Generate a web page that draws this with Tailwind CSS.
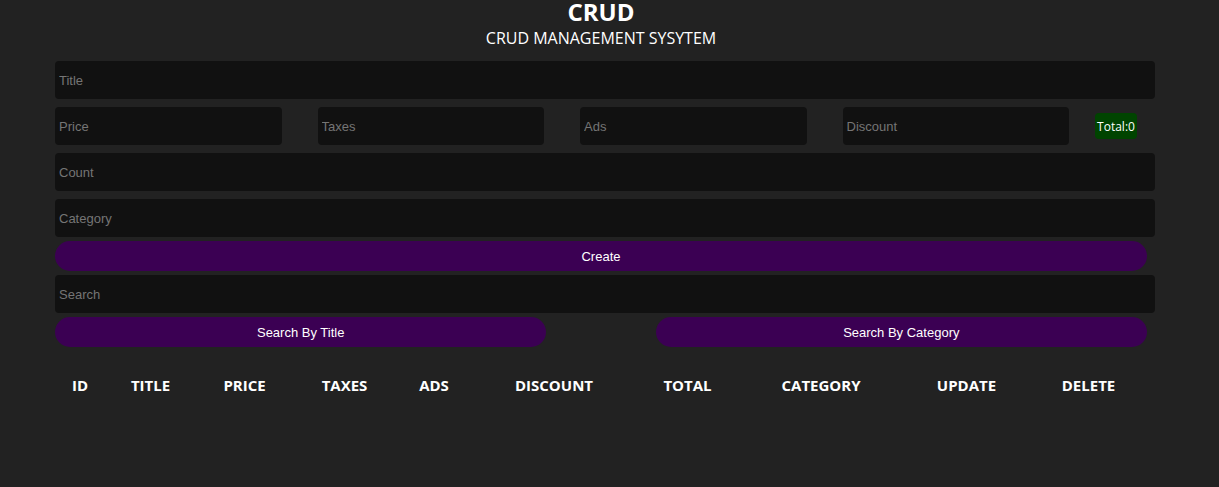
<!DOCTYPE html>
<html lang="en">
<head>
<meta charset="utf-8">
<meta name="viewport" content="width=device-width, initial-scale=1">
<title>CRUD</title>
<script src="https://cdn.jsdelivr.net/npm/@tailwindcss/browser@4"></script>
</head>
<body class="min-h-screen bg-[#222222] font-['Segoe_UI','Open_Sans',sans-serif] text-white">
<main class="pr-16 pl-[55px]">
  <header class="mr-2 text-center">
    <h1 class="text-2xl leading-6 font-bold">CRUD</h1>
    <p class="text-base leading-7">CRUD MANAGEMENT SYSYTEM</p>
  </header>
  <form class="mt-[9px] font-['Liberation_Sans',sans-serif] text-[13px]">
    <div class="flex flex-col gap-2">
      <input type="text" aria-label="Title" placeholder="Title" class="h-[38px] w-full rounded-sm bg-[#111111] px-1 placeholder:text-[#757575]">
      <div class="mr-[18px] flex items-center gap-[26px]">
        <div class="grid flex-1 grid-cols-4 gap-9">
          <input type="number" aria-label="Price" placeholder="Price" class="h-[38px] w-full rounded-sm bg-[#111111] px-1 placeholder:text-[#757575]">
          <input type="number" aria-label="Taxes" placeholder="Taxes" class="h-[38px] w-full rounded-sm bg-[#111111] px-1 placeholder:text-[#757575]">
          <input type="number" aria-label="Ads" placeholder="Ads" class="h-[38px] w-full rounded-sm bg-[#111111] px-1 placeholder:text-[#757575]">
          <input type="number" aria-label="Discount" placeholder="Discount" class="h-[38px] w-full rounded-sm bg-[#111111] px-1 placeholder:text-[#757575]">
        </div>
        <output class="w-[42px] rounded-sm bg-[#004400] pt-1 pb-0.5 text-center font-['Segoe_UI','Open_Sans',sans-serif] text-xs leading-5 font-medium whitespace-nowrap">Total:0</output>
      </div>
      <input type="number" aria-label="Count" placeholder="Count" class="h-[38px] w-full rounded-sm bg-[#111111] px-1 placeholder:text-[#757575]">
      <input type="text" aria-label="Category" placeholder="Category" class="h-[38px] w-full rounded-sm bg-[#111111] px-1 placeholder:text-[#757575]">
    </div>
    <div class="mt-1 flex flex-col gap-1">
      <button type="button" class="mr-2 h-[30px] rounded-full bg-[#3b0053] pt-0.5">Create</button>
      <input type="search" aria-label="Search" placeholder="Search" class="h-[38px] w-full rounded-sm bg-[#111111] px-1 placeholder:text-[#757575]">
      <div class="mr-2 flex justify-between">
        <button type="button" class="h-[30px] w-[45%] rounded-full bg-[#3b0053] pt-0.5">Search By Title</button>
        <button type="button" class="h-[30px] w-[45%] rounded-full bg-[#3b0053] pt-0.5">Search By Category</button>
      </div>
    </div>
  </form>
  <div class="mt-6 mr-2">
    <table class="w-full table-fixed text-[15px] leading-7">
      <colgroup>
        <col class="w-[50px]"><col class="w-[91px]"><col class="w-[97px]"><col class="w-[103px]"><col class="w-[76px]"><col class="w-[164px]"><col class="w-[103px]"><col class="w-[164px]"><col class="w-[127px]"><col class="w-[117px]">
      </colgroup>
      <thead>
        <tr><th scope="col">ID</th><th scope="col">TITLE</th><th scope="col">PRICE</th><th scope="col">TAXES</th><th scope="col">ADS</th><th scope="col">DISCOUNT</th><th scope="col">TOTAL</th><th scope="col">CATEGORY</th><th scope="col">UPDATE</th><th scope="col">DELETE</th></tr>
      </thead>
      <tbody></tbody>
    </table>
  </div>
</main>
</body>
</html>
